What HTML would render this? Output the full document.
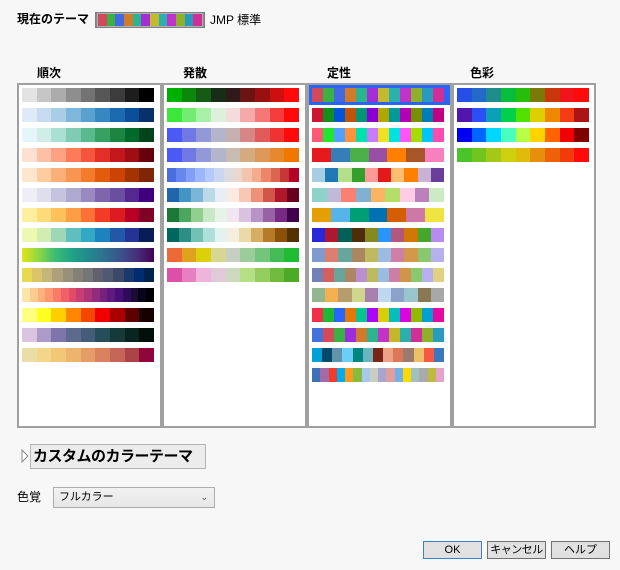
<!DOCTYPE html>
<html><head><meta charset="utf-8"><style>
body{margin:0;width:620px;height:570px;background:#f7f7f7;font-family:"Liberation Sans","Noto Sans CJK JP",sans-serif;font-size:12px;color:#000;position:relative;overflow:hidden}
.a{position:absolute;white-space:nowrap}
.b{font-weight:bold}
.panel{position:absolute;top:83px;height:341px;background:#fff;border:2px solid #a0a0a0}
.r{position:absolute;height:14px;width:132px;display:flex}
.r span{flex:1}
.btn{position:absolute;top:541px;height:16px;width:57px;border:1px solid #707070;background:#e1e1e1;text-align:center;line-height:16px;font-size:11px;white-space:nowrap;overflow:hidden}
</style></head><body>
<div class="a b" style="left:17px;top:10px">現在のテーマ</div>
<div class="a" style="left:95px;top:12px;width:108px;height:14px;border:1px solid #808080;background:#8a8a8a;padding:0"><div class="r" style="left:2px;top:1px;width:104px;height:12px;outline:1px solid #b0b0b0"><span style="background:#d04a5c"></span><span style="background:#3cb043"></span><span style="background:#4169e1"></span><span style="background:#d07a2a"></span><span style="background:#2bb48f"></span><span style="background:#a22ed4"></span><span style="background:#c4b82c"></span><span style="background:#2bb0ad"></span><span style="background:#c033c9"></span><span style="background:#8fb02b"></span><span style="background:#2999c0"></span><span style="background:#cf2f96"></span></div></div>
<div class="a" style="left:210px;top:11px">JMP 標準</div>
<div class="a b" style="left:37px;top:64px">順次</div>
<div class="a b" style="left:183px;top:64px">発散</div>
<div class="a b" style="left:327px;top:64px">定性</div>
<div class="a b" style="left:470px;top:64px">色彩</div>
<div class="panel" style="left:17px;width:141px"></div>
<div class="panel" style="left:162px;width:141px"></div>
<div class="panel" style="left:307px;width:141px"></div>
<div class="panel" style="left:452px;width:140px"></div>
<div class="a" style="left:309px;top:85px;width:141px;height:20px;background:#2a64f7"></div>

<div class="r" style="left:22px;top:88px"><span style="background:#e3e3e3"></span><span style="background:#c6c6c6"></span><span style="background:#acacac"></span><span style="background:#8e8e8e"></span><span style="background:#737373"></span><span style="background:#575757"></span><span style="background:#3c3c3c"></span><span style="background:#1d1d1d"></span><span style="background:#000"></span></div>
<div class="r" style="left:22px;top:108px"><span style="background:#deebf7"></span><span style="background:#c6dbef"></span><span style="background:#a9cde4"></span><span style="background:#7fb7dc"></span><span style="background:#5aa1cf"></span><span style="background:#3787c0"></span><span style="background:#1c69b0"></span><span style="background:#0b4e9a"></span><span style="background:#08306b"></span></div>
<div class="r" style="left:22px;top:128px"><span style="background:#e5f5f9"></span><span style="background:#d0ede8"></span><span style="background:#aadfd4"></span><span style="background:#7fcbb4"></span><span style="background:#5bb98f"></span><span style="background:#39a063"></span><span style="background:#1d8541"></span><span style="background:#006a2c"></span><span style="background:#00441b"></span></div>
<div class="r" style="left:22px;top:148px"><span style="background:#fee0d2"></span><span style="background:#fcc0a5"></span><span style="background:#fca183"></span><span style="background:#fb7b5b"></span><span style="background:#f6553d"></span><span style="background:#e32f27"></span><span style="background:#c1171d"></span><span style="background:#9e0e15"></span><span style="background:#67000d"></span></div>
<div class="r" style="left:22px;top:168px"><span style="background:#fee6ce"></span><span style="background:#fdcca0"></span><span style="background:#fbb07a"></span><span style="background:#f79553"></span><span style="background:#f37b2c"></span><span style="background:#e35b0e"></span><span style="background:#cc4403"></span><span style="background:#a33303"></span><span style="background:#7f2704"></span></div>
<div class="r" style="left:22px;top:188px"><span style="background:#efedf5"></span><span style="background:#dedeed"></span><span style="background:#c6c3df"></span><span style="background:#adaacf"></span><span style="background:#9a89c0"></span><span style="background:#7f64ae"></span><span style="background:#6a4fa1"></span><span style="background:#54288f"></span><span style="background:#3f007d"></span></div>
<div class="r" style="left:22px;top:208px"><span style="background:#ffeda0"></span><span style="background:#fedb79"></span><span style="background:#fec15b"></span><span style="background:#fd9e44"></span><span style="background:#fd7136"></span><span style="background:#f43b28"></span><span style="background:#de1a22"></span><span style="background:#b80027"></span><span style="background:#800026"></span></div>
<div class="r" style="left:22px;top:228px"><span style="background:#edf8b1"></span><span style="background:#d2ecb2"></span><span style="background:#9ed7b7"></span><span style="background:#5fbfc0"></span><span style="background:#32a8c5"></span><span style="background:#1e82bc"></span><span style="background:#2358a6"></span><span style="background:#253493"></span><span style="background:#081d58"></span></div>
<div class="r" style="left:22px;top:248px;background:linear-gradient(90deg,#e2e419,#8fd744,#3dbc74,#20a386,#228a8d,#2d708e,#3b528b,#472d7b,#440154)"></div>
<div class="r" style="left:22px;top:268px"><span style="background:#e9d853"></span><span style="background:#dbc46a"></span><span style="background:#c5b578"></span><span style="background:#aea07a"></span><span style="background:#98907a"></span><span style="background:#848076"></span><span style="background:#757575"></span><span style="background:#625f6f"></span><span style="background:#515872"></span><span style="background:#3b4a6b"></span><span style="background:#1a386a"></span><span style="background:#002d72"></span><span style="background:#00224e"></span></div>
<div class="r" style="left:22px;top:288px"><span style="background:#fde5a8"></span><span style="background:#fdcb8f"></span><span style="background:#fdb27a"></span><span style="background:#fd9770"></span><span style="background:#fa7b68"></span><span style="background:#f06068"></span><span style="background:#e04a6b"></span><span style="background:#c73e72"></span><span style="background:#ad3476"></span><span style="background:#912b7b"></span><span style="background:#78217c"></span><span style="background:#5e1a7c"></span><span style="background:#471078"></span><span style="background:#2e0b5b"></span><span style="background:#180d33"></span><span style="background:#08051a"></span><span style="background:#000004"></span></div>
<div class="r" style="left:22px;top:308px"><span style="background:#ffff80"></span><span style="background:#ffff20"></span><span style="background:#ffd000"></span><span style="background:#ff8800"></span><span style="background:#f44800"></span><span style="background:#f20000"></span><span style="background:#aa0000"></span><span style="background:#5c0000"></span><span style="background:#180000"></span></div>
<div class="r" style="left:22px;top:328px"><span style="background:#d9c5e2"></span><span style="background:#ae9ac8"></span><span style="background:#7e75aa"></span><span style="background:#5d6a8e"></span><span style="background:#445c78"></span><span style="background:#264d5a"></span><span style="background:#16393a"></span><span style="background:#0a2420"></span><span style="background:#020f0a"></span></div>
<div class="r" style="left:22px;top:348px"><span style="background:#ebdda6"></span><span style="background:#f3d68a"></span><span style="background:#f2c878"></span><span style="background:#ecb46c"></span><span style="background:#e59d68"></span><span style="background:#da825f"></span><span style="background:#c66658"></span><span style="background:#ab4446"></span><span style="background:#8e063c"></span></div>

<div class="r" style="left:167px;top:88px"><span style="background:#00b000"></span><span style="background:#0c870c"></span><span style="background:#155a15"></span><span style="background:#172d15"></span><span style="background:#2f1919"></span><span style="background:#6a1414"></span><span style="background:#991010"></span><span style="background:#cd0f0f"></span><span style="background:#ff0a0a"></span></div>
<div class="r" style="left:167px;top:108px"><span style="background:#3ce63c"></span><span style="background:#73ec73"></span><span style="background:#a8f0a8"></span><span style="background:#dcf0dc"></span><span style="background:#f5dcdc"></span><span style="background:#f5aaaa"></span><span style="background:#f57878"></span><span style="background:#f53c3c"></span><span style="background:#ff0a0a"></span></div>
<div class="r" style="left:167px;top:128px"><span style="background:#4b5af5"></span><span style="background:#7078e4"></span><span style="background:#9299d7"></span><span style="background:#b2b5cc"></span><span style="background:#c7b0b0"></span><span style="background:#d68686"></span><span style="background:#e05a5a"></span><span style="background:#ef3232"></span><span style="background:#ff0a0a"></span></div>
<div class="r" style="left:167px;top:148px"><span style="background:#4b5af5"></span><span style="background:#7078e4"></span><span style="background:#9299d7"></span><span style="background:#b2b5cc"></span><span style="background:#c8bcb0"></span><span style="background:#d4aa80"></span><span style="background:#dc9858"></span><span style="background:#e6882c"></span><span style="background:#f07800"></span></div>
<div class="r" style="left:167px;top:168px"><span style="background:#4b6de0"></span><span style="background:#6687ec"></span><span style="background:#829ff8"></span><span style="background:#9cb7fe"></span><span style="background:#b4c9fd"></span><span style="background:#c9d7f0"></span><span style="background:#dbdcdf"></span><span style="background:#e9d6cc"></span><span style="background:#f4c4ae"></span><span style="background:#f5ac8d"></span><span style="background:#ee8468"></span><span style="background:#dc6552"></span><span style="background:#c73735"></span><span style="background:#b40426"></span></div>
<div class="r" style="left:167px;top:188px"><span style="background:#2166ac"></span><span style="background:#4393c3"></span><span style="background:#7bb6d8"></span><span style="background:#bcd9e8"></span><span style="background:#e7eff4"></span><span style="background:#fbe9e2"></span><span style="background:#f9c8b3"></span><span style="background:#eb9279"></span><span style="background:#d15649"></span><span style="background:#b0172a"></span><span style="background:#67001f"></span></div>
<div class="r" style="left:167px;top:208px"><span style="background:#1b7837"></span><span style="background:#4da660"></span><span style="background:#91cf8e"></span><span style="background:#c8e8c6"></span><span style="background:#e8f3e7"></span><span style="background:#f1e5f0"></span><span style="background:#d9c1df"></span><span style="background:#b694c6"></span><span style="background:#9863a5"></span><span style="background:#762a83"></span><span style="background:#40004b"></span></div>
<div class="r" style="left:167px;top:228px"><span style="background:#01665e"></span><span style="background:#2e8d86"></span><span style="background:#73c0b4"></span><span style="background:#afdfd9"></span><span style="background:#e3f2f1"></span><span style="background:#f5eedf"></span><span style="background:#ecd9a8"></span><span style="background:#d5ae64"></span><span style="background:#b67a2b"></span><span style="background:#8c5109"></span><span style="background:#543005"></span></div>
<div class="r" style="left:167px;top:248px"><span style="background:#eb6a36"></span><span style="background:#e0a020"></span><span style="background:#dcd00a"></span><span style="background:#d8d694"></span><span style="background:#c7cfc2"></span><span style="background:#9bcd9a"></span><span style="background:#72c57a"></span><span style="background:#44bb55"></span><span style="background:#1fbb32"></span></div>
<div class="r" style="left:167px;top:268px"><span style="background:#dc50a8"></span><span style="background:#e680c0"></span><span style="background:#f0b4dc"></span><span style="background:#e0cad8"></span><span style="background:#cdd9bf"></span><span style="background:#b5df85"></span><span style="background:#93cd60"></span><span style="background:#6ebb3e"></span><span style="background:#4bab26"></span></div>

<div class="r" style="left:312px;top:88px"><span style="background:#d04a5c"></span><span style="background:#3cb043"></span><span style="background:#4169e1"></span><span style="background:#d07a2a"></span><span style="background:#2bb48f"></span><span style="background:#a22ed4"></span><span style="background:#c4b82c"></span><span style="background:#2bb0ad"></span><span style="background:#c033c9"></span><span style="background:#8fb02b"></span><span style="background:#2999c0"></span><span style="background:#cf2f96"></span></div>
<div class="r" style="left:312px;top:108px"><span style="background:#cc1530"></span><span style="background:#108e1e"></span><span style="background:#0054d6"></span><span style="background:#c05406"></span><span style="background:#009675"></span><span style="background:#8a00d4"></span><span style="background:#b1a600"></span><span style="background:#009998"></span><span style="background:#b300b5"></span><span style="background:#779000"></span><span style="background:#007db7"></span><span style="background:#c10084"></span></div>
<div class="r" style="left:312px;top:128px"><span style="background:#fc5a76"></span><span style="background:#22e62e"></span><span style="background:#50a0fd"></span><span style="background:#fc923d"></span><span style="background:#00e1ae"></span><span style="background:#c87cfc"></span><span style="background:#efe121"></span><span style="background:#00e2e2"></span><span style="background:#fe54fc"></span><span style="background:#a5dd00"></span><span style="background:#00c4fa"></span><span style="background:#ff4ab0"></span></div>
<div class="r" style="left:312px;top:148px"><span style="background:#e41a1c"></span><span style="background:#377eb8"></span><span style="background:#4daf4a"></span><span style="background:#984ea3"></span><span style="background:#ff7f00"></span><span style="background:#a65628"></span><span style="background:#f781bf"></span></div>
<div class="r" style="left:312px;top:168px"><span style="background:#a6cee3"></span><span style="background:#1f78b4"></span><span style="background:#b2df8a"></span><span style="background:#33a02c"></span><span style="background:#fb9a99"></span><span style="background:#e31a1c"></span><span style="background:#fdbf6f"></span><span style="background:#ff7f00"></span><span style="background:#cab2d6"></span><span style="background:#6a3d9a"></span></div>
<div class="r" style="left:312px;top:188px"><span style="background:#8dd3c7"></span><span style="background:#bebada"></span><span style="background:#fb8072"></span><span style="background:#80b1d3"></span><span style="background:#fdb462"></span><span style="background:#b3de69"></span><span style="background:#fccde5"></span><span style="background:#bc80bd"></span><span style="background:#ccebc5"></span></div>
<div class="r" style="left:312px;top:208px"><span style="background:#e69f00"></span><span style="background:#56b4e9"></span><span style="background:#009e73"></span><span style="background:#0072b2"></span><span style="background:#d55e00"></span><span style="background:#cc79a7"></span><span style="background:#f0e442"></span></div>
<div class="r" style="left:312px;top:228px"><span style="background:#2828d8"></span><span style="background:#ad1830"></span><span style="background:#006058"></span><span style="background:#4f2c08"></span><span style="background:#848a1e"></span><span style="background:#2896f8"></span><span style="background:#b2587e"></span><span style="background:#d07804"></span><span style="background:#42a72b"></span><span style="background:#b78cf0"></span></div>
<div class="r" style="left:312px;top:248px"><span style="background:#7f9acf"></span><span style="background:#dd7f6e"></span><span style="background:#67a69c"></span><span style="background:#ac8660"></span><span style="background:#bfba5f"></span><span style="background:#9bbce0"></span><span style="background:#cf7fa5"></span><span style="background:#d3984b"></span><span style="background:#8ac870"></span><span style="background:#b7b0ef"></span></div>
<div class="r" style="left:312px;top:268px"><span style="background:#7180b9"></span><span style="background:#d35f5e"></span><span style="background:#66a49c"></span><span style="background:#ad8561"></span><span style="background:#b98fcf"></span><span style="background:#bcbb5d"></span><span style="background:#97bde3"></span><span style="background:#cd7ea4"></span><span style="background:#d0954b"></span><span style="background:#8ac870"></span><span style="background:#b7b0ef"></span><span style="background:#e0d280"></span></div>
<div class="r" style="left:312px;top:288px"><span style="background:#92b592"></span><span style="background:#f3b04e"></span><span style="background:#b79c6e"></span><span style="background:#cfd68e"></span><span style="background:#a681ab"></span><span style="background:#c0d7f0"></span><span style="background:#8ca2c8"></span><span style="background:#99c6cc"></span><span style="background:#8a7853"></span><span style="background:#a8a8a8"></span></div>
<div class="r" style="left:312px;top:308px"><span style="background:#f03049"></span><span style="background:#1fb832"></span><span style="background:#2666fc"></span><span style="background:#e37707"></span><span style="background:#07c58e"></span><span style="background:#aa07fa"></span><span style="background:#dacc07"></span><span style="background:#07bcbd"></span><span style="background:#d807e0"></span><span style="background:#91b803"></span><span style="background:#00a0d0"></span><span style="background:#e60aa5"></span></div>
<div class="r" style="left:312px;top:328px"><span style="background:#4272dd"></span><span style="background:#d44a58"></span><span style="background:#3cb043"></span><span style="background:#9c2ddb"></span><span style="background:#d27a2b"></span><span style="background:#2ab58f"></span><span style="background:#c133c9"></span><span style="background:#c6b62a"></span><span style="background:#2bafad"></span><span style="background:#cf2f96"></span><span style="background:#8fb02b"></span><span style="background:#2a9abe"></span></div>
<div class="r" style="left:312px;top:348px"><span style="background:#00a0d8"></span><span style="background:#014a6a"></span><span style="background:#6192aa"></span><span style="background:#6ccdf5"></span><span style="background:#00857f"></span><span style="background:#6db5be"></span><span style="background:#782513"></span><span style="background:#eca284"></span><span style="background:#de765a"></span><span style="background:#9b7b6e"></span><span style="background:#edc065"></span><span style="background:#f75846"></span><span style="background:#3977bf"></span></div>
<div class="r" style="left:312px;top:368px"><span style="background:#3a72b5"></span><span style="background:#a26aa7"></span><span style="background:#f13c2c"></span><span style="background:#00aeef"></span><span style="background:#fb9a1f"></span><span style="background:#86bb3e"></span><span style="background:#a8c9ec"></span><span style="background:#cccdc2"></span><span style="background:#a8a6d0"></span><span style="background:#e29d9d"></span><span style="background:#71b1e5"></span><span style="background:#fed904"></span><span style="background:#9fc3bc"></span><span style="background:#aaaaaa"></span><span style="background:#bfba3e"></span><span style="background:#e6a2cb"></span></div>

<div class="r" style="left:457px;top:88px"><span style="background:#274fe8"></span><span style="background:#2369c7"></span><span style="background:#1e8d8c"></span><span style="background:#07bd3b"></span><span style="background:#29bd0b"></span><span style="background:#797a08"></span><span style="background:#c9380d"></span><span style="background:#f0151a"></span><span style="background:#ff0a0a"></span></div>
<div class="r" style="left:457px;top:108px"><span style="background:#5216af"></span><span style="background:#2a50f5"></span><span style="background:#0ba0b8"></span><span style="background:#00d04a"></span><span style="background:#52e000"></span><span style="background:#e0cf00"></span><span style="background:#ee8800"></span><span style="background:#f43c14"></span><span style="background:#ad1414"></span></div>
<div class="r" style="left:457px;top:128px"><span style="background:#0000f0"></span><span style="background:#0064ff"></span><span style="background:#00d8ff"></span><span style="background:#48ffc0"></span><span style="background:#b8ff48"></span><span style="background:#ffd400"></span><span style="background:#ff6400"></span><span style="background:#f00000"></span><span style="background:#800000"></span></div>
<div class="r" style="left:457px;top:148px"><span style="background:#4bc42a"></span><span style="background:#72c41e"></span><span style="background:#a3c918"></span><span style="background:#cdcf0f"></span><span style="background:#dfbb0b"></span><span style="background:#e58f0a"></span><span style="background:#ee6108"></span><span style="background:#f33a0c"></span><span style="background:#ff0a0a"></span></div>

<svg class="a" style="left:21px;top:449px" width="8" height="14"><path d="M1 1 L7 7 L1 13 Z" fill="#fff" stroke="#888"/></svg>
<div class="a b" style="left:30px;top:444px;width:176px;height:25px;background:#ececec;border:1px solid #b4b4b4;font-size:15px;letter-spacing:-0.5px;line-height:23px;padding-left:2px;box-sizing:border-box;overflow:hidden">カスタムのカラーテーマ</div>
<div class="a" style="left:17px;top:488px">色覚</div>
<div class="a" style="left:53px;top:487px;width:162px;height:21px;border:1px solid #adadad;background:linear-gradient(#f2f2f2,#e6e6e6);font-size:11px;line-height:19px;padding-left:5px;box-sizing:border-box">フルカラー<span style="position:absolute;right:6px;top:0;font-size:9px;color:#555">⌄</span></div>
<div class="btn" style="left:423px;border-color:#3c7fd0">OK</div>
<div class="btn" style="left:487px;letter-spacing:-0.5px">キャンセル</div>
<div class="btn" style="left:551px">ヘルプ</div>
</body></html>
